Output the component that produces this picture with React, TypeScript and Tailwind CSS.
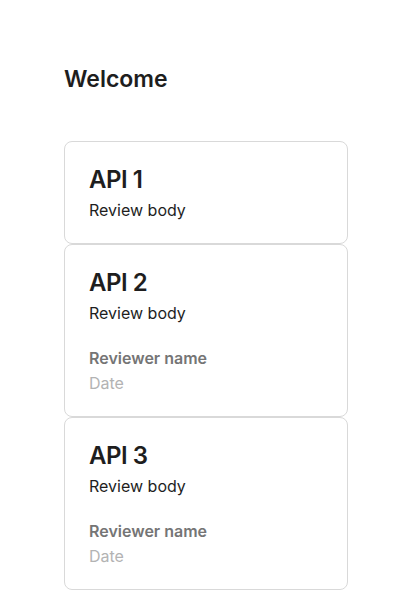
const reviews = [
  { title: "API 1", body: "Review body", showReviewer: false },
  { title: "API 2", body: "Review body", showReviewer: true },
  { title: "API 3", body: "Review body", showReviewer: true },
];

const ReviewCard = ({
  title,
  body,
  showReviewer,
}: {
  title: string;
  body: string;
  showReviewer: boolean;
}) => (
  <div className="flex flex-col rounded-lg border border-[#d9d9d9] bg-white px-6 pt-6 pb-[22px]">
    <h2 className="text-2xl leading-[1.2] font-semibold tracking-[-0.02em] text-[#1e1e1e]">
      {title}
    </h2>
    <p className="mt-1 text-base leading-[1.4] text-[#1e1e1e]">{body}</p>
    {showReviewer && (
      <div className="mt-[23px] flex flex-col gap-[2px]">
        <span className="text-base leading-[1.4] font-semibold text-[#757575]">
          Reviewer name
        </span>
        <span className="text-base leading-[1.4] text-[#b3b3b3]">Date</span>
      </div>
    )}
  </div>
);

export default function App() {
  return (
    <div
      className="min-h-screen bg-white px-16 pt-[67px]"
      style={{ fontFamily: "Inter, 'Noto Sans', sans-serif" }}
    >
      <h1 className="text-[23px] leading-6 font-semibold text-[#1e1e1e]">
        Welcome
      </h1>

      {/* review list */}
      <div className="mt-[50px] flex flex-col">
        {reviews.map((r) => (
          <ReviewCard key={r.title} {...r} />
        ))}
      </div>
    </div>
  );
}
